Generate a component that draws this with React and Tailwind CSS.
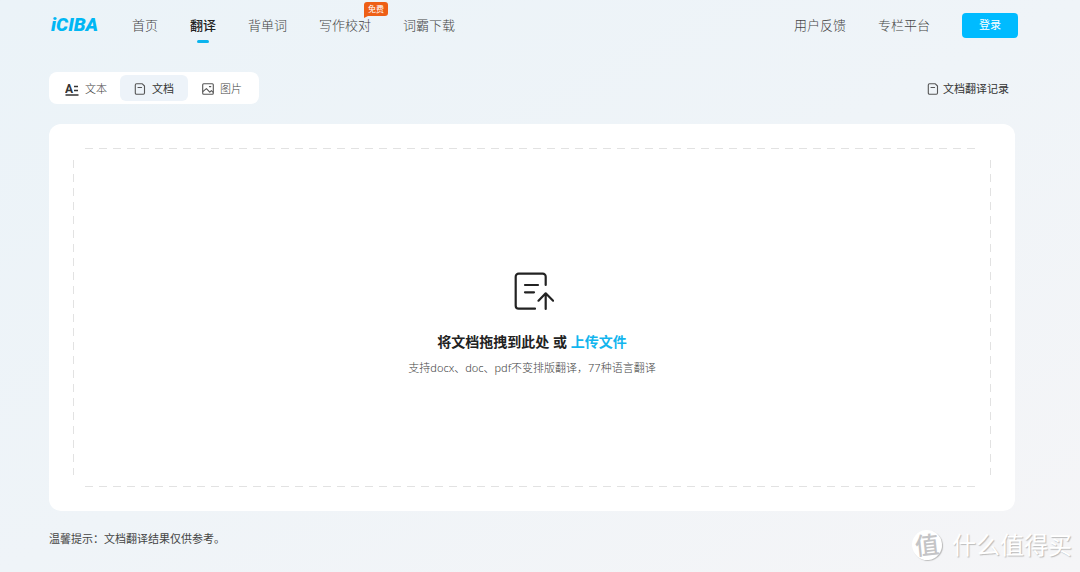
import { useRef, useState } from 'react';

const NAV_ITEMS = [
  { key: 'home', label: '首页' },
  { key: 'translate', label: '翻译', active: true },
  { key: 'words', label: '背单词' },
  { key: 'writing', label: '写作校对', badge: '免费' },
  { key: 'download', label: '词霸下载' }
];

const TABS = [
  { key: 'text', label: '文本', Icon: TextIcon },
  { key: 'doc', label: '文档', Icon: DocIcon },
  { key: 'image', label: '图片', Icon: ImageIcon }
];

function TextIcon() {
  return (
    <svg width="14" height="18" viewBox="0 0 14 18" fill="none" stroke="#333" aria-hidden="true">
      <text x="0" y="13" fontSize="12" fontWeight="700" fontFamily="Roboto, sans-serif" fill="#333" stroke="none">A</text>
      <path d="M9 6.5h4M9 10.5h4M0.5 15h13" strokeWidth="1.3" />
    </svg>
  );
}

function DocIcon() {
  return (
    <svg width="12" height="12" viewBox="0 0 12 12" fill="none" stroke="#555" strokeWidth="1.1" strokeLinejoin="round" strokeLinecap="round" aria-hidden="true">
      <path d="M2.5 .8h5.8l2.2 2.2v7a1.2 1.2 0 0 1-1.2 1.2H2.5a1.2 1.2 0 0 1-1.2-1.2V2A1.2 1.2 0 0 1 2.5 .8z" />
      <path d="M4 4.5h3.6" />
    </svg>
  );
}

function ImageIcon() {
  return (
    <svg width="12" height="12" viewBox="0 0 12 12" fill="none" stroke="#555" strokeWidth="1.1" strokeLinejoin="round" aria-hidden="true">
      <rect x=".7" y=".7" width="10.6" height="10.6" rx="1" />
      <path d="M.8 8.6l3.6-3 3.4 3.6 1.6-1.6 1.8 1.8" />
      <path d="M7.4 3.6h1.4" strokeLinecap="round" />
    </svg>
  );
}

function UploadIcon() {
  return (
    <svg width="40" height="40" viewBox="0 0 40 40" fill="none" stroke="#222" strokeWidth="2.2" strokeLinecap="round" strokeLinejoin="round" aria-hidden="true">
      <path d="M31.7 13V4.7a3 3 0 0 0-3-3H4.7a3 3 0 0 0-3 3v29a3 3 0 0 0 3 3H21" />
      <path d="M11 13h13M11 20.3h9" />
      <path d="M31.7 37V21.5M24.5 28.7l7.2-7.4 7.4 7.4" />
    </svg>
  );
}

export default function App() {
  const [tab, setTab] = useState('doc');
  const fileRef = useRef(null);

  return (
    <div
      lang="zh-CN"
      className="relative flex min-h-screen flex-col bg-linear-to-br from-[#ebf3f8] via-[#eff4f8] to-[#f5f5f7] pl-[49px] pr-[65px] font-['Noto_Sans','Noto_Sans_CJK_SC',sans-serif] text-[#444]"
    >
      {/* Header */}
      <header className="-mr-[3px] flex h-[50px] items-center pl-[2px]">
        <a href="#home" className="w-[81px] font-[Roboto,sans-serif] text-[19px] font-black italic text-[#00b7f4]">iCIBA</a>
        <nav className="flex gap-8 text-[13px] leading-5">
          {NAV_ITEMS.map((item) => (
            <a key={item.key} href={`#${item.key}`} className={`relative ${item.active ? 'font-medium text-[#222]' : 'font-light'}`}>
              {item.label}
              {item.active && (
                <span className="absolute -bottom-2 left-1/2 h-[3px] w-3 -translate-x-1/2 rounded-full bg-[#0bb4ee]" />
              )}
              {item.badge && (
                <span className="absolute -top-[13px] -right-[17px] rounded-[3px] rounded-bl-none bg-[#ee5f16] px-1 text-[8px] font-normal leading-[14px] text-white">
                  {item.badge}
                  <span className="absolute top-full left-0 border-t-2 border-r-4 border-t-[#ee5f16] border-r-transparent" />
                </span>
              )}
            </a>
          ))}
        </nav>
        <div className="ml-auto flex items-center gap-8 text-[13px] font-light leading-5">
          <a href="#feedback">用户反馈</a>
          <a href="#columns">专栏平台</a>
          <button className="h-[25px] w-14 rounded bg-[#00bbff] text-[11px] font-normal text-white">登录</button>
        </div>
      </header>

      {/* Tabs */}
      <div className="mt-[22px] flex items-center justify-between">
        <div className="flex rounded-lg bg-white p-[3px] text-[11px] leading-4">
          {TABS.map(({ key, label, Icon }) => (
            <button
              key={key}
              onClick={() => setTab(key)}
              className={`flex h-[26px] w-[68px] items-center justify-center gap-[6px] rounded-md pt-px ${
                tab === key ? 'bg-[#edf3f9] text-[#333]' : 'font-light'
              }`}
            >
              <Icon />
              {label}
            </button>
          ))}
        </div>
        <a href="#history" className="mr-[6px] flex items-center gap-1 pt-px text-[11px] leading-4 text-[#333]">
          <DocIcon />
          文档翻译记录
        </a>
      </div>

      {/* Upload card */}
      <main className="mt-5 flex flex-1 rounded-xl bg-white p-6">
        <div
          className="flex flex-1 flex-col items-center justify-center bg-no-repeat pt-3
            [background-image:repeating-linear-gradient(90deg,#e2e2e2_0_8px,transparent_8px_14px),repeating-linear-gradient(90deg,#e2e2e2_0_8px,transparent_8px_14px),repeating-linear-gradient(#e2e2e2_0_8px,transparent_8px_14px),repeating-linear-gradient(#e2e2e2_0_8px,transparent_8px_14px)]
            [background-position:center_top,center_bottom,left_center,right_center]
            [background-size:calc(100%_-_24px)_1px,calc(100%_-_24px)_1px,1px_calc(100%_-_24px),1px_calc(100%_-_24px)]"
        >
          <div className="pl-1">
            <UploadIcon />
          </div>
          <p className="mt-5 text-[14px] font-bold leading-5 text-[#222]">
            将文档拖拽到此处 或{' '}
            <button onClick={() => fileRef.current.click()} className="text-[#12b5ee]">上传文件</button>
          </p>
          <input ref={fileRef} type="file" accept=".docx,.doc,.pdf" aria-label="上传文件" className="hidden" />
          <p className="mt-2 text-[11px] font-light leading-4">支持docx、doc、pdf不变排版翻译，77种语言翻译</p>
        </div>
      </main>

      <footer className="flex h-[61px] items-center pb-1 text-[11px]">温馨提示：文档翻译结果仅供参考。</footer>

      {/* Watermark */}
      <div className="absolute right-2 bottom-3 flex items-center gap-[10px] text-[24px] leading-[30px] text-white [text-shadow:1px_1px_1px_#bbb]">
        <span className="flex size-[30px] -rotate-6 items-center justify-center rounded-full bg-white font-medium text-[#c4c4c6] shadow-[1px_1px_1px_#bbb] [text-shadow:none]">值</span>
        什么值得买
      </div>
    </div>
  );
}
